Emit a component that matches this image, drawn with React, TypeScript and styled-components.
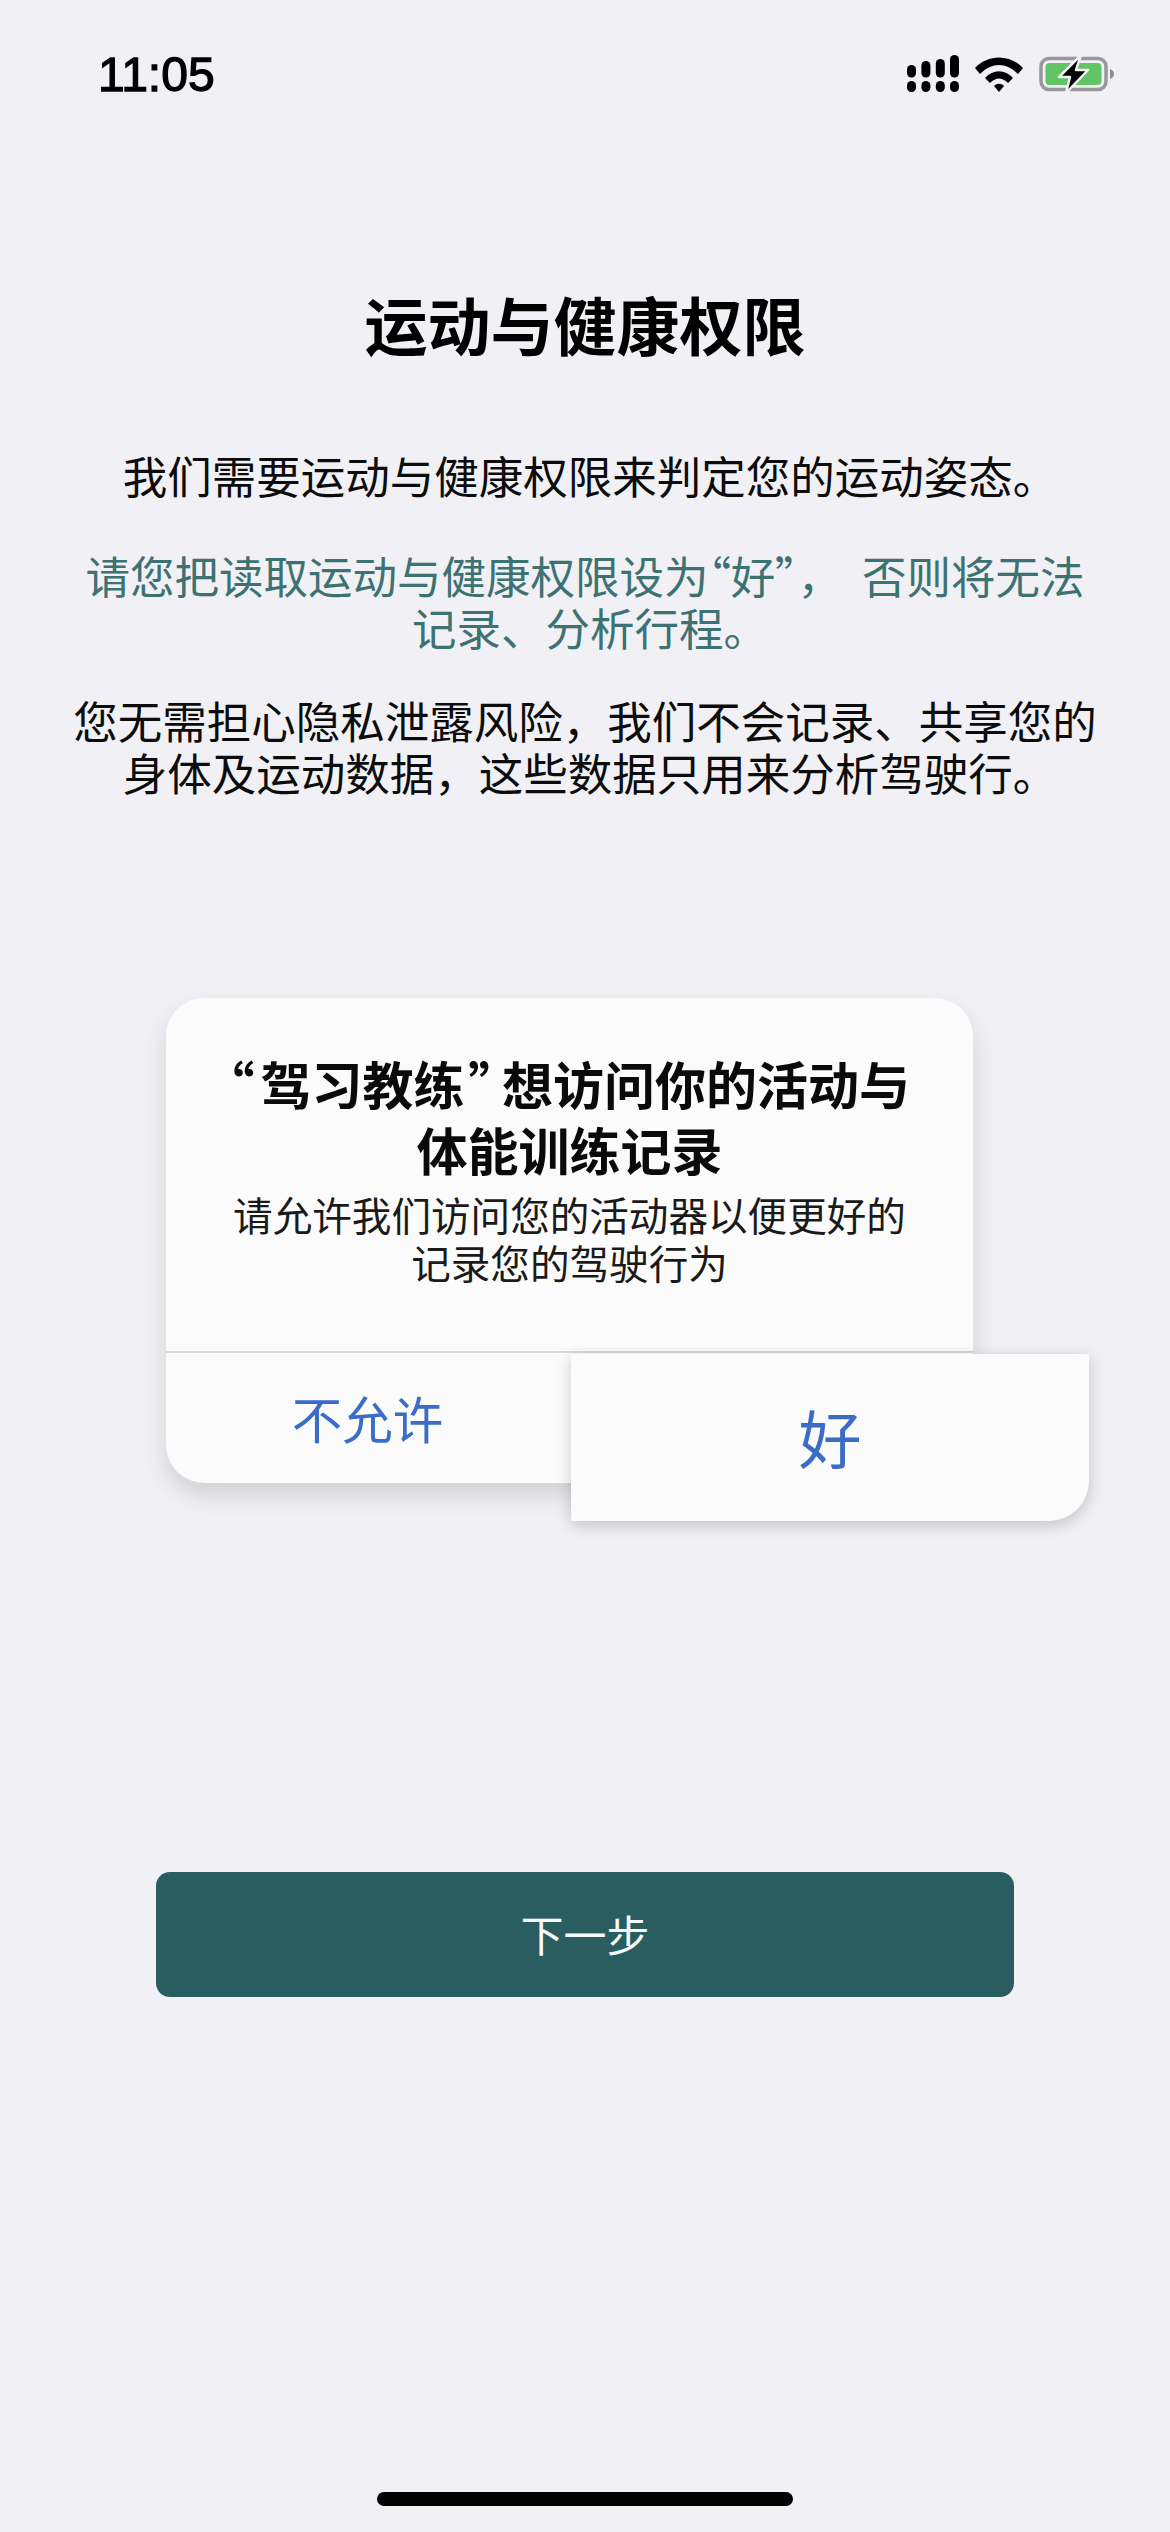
import React from "react";
import styled, { createGlobalStyle } from "styled-components";

const Global = createGlobalStyle`
  html, body { margin: 0; padding: 0; background: #f0f0f5; }
  * { box-sizing: border-box; }
`;

const cjk = `"Noto Sans CJK SC", "Noto Sans", sans-serif`;

const Page = styled.div`
  width: 1170px;
  height: 2532px;
  background: #f0f0f5;
  display: flex;
  flex-direction: column;
  align-items: center;
  font-family: ${cjk};
  overflow: hidden;
`;

const StatusBar = styled.div`
  width: 100%;
  height: 150px;
  flex: none;
  padding: 51px 55px 0 98px;
  display: flex;
  justify-content: space-between;
  align-items: flex-start;
`;

const Clock = styled.div`
  font-family: "Liberation Sans", Arial, sans-serif;
  font-size: 49px;
  line-height: 46px;
  font-weight: 400;
  color: #000;
  transform: scaleX(0.98);
  transform-origin: left center;
  -webkit-text-stroke: 1.3px #000;
`;

const StatusIcons = styled.div`
  display: flex;
  align-items: flex-start;
  gap: 15px;
  margin-top: 4px;
`;

const Title = styled.h1`
  margin: 138px 0 0;
  font-size: 63px;
  line-height: 70px;
  font-weight: 700;
  color: #000;
  text-align: center;
  white-space: nowrap;
`;

const Paragraph = styled.div<{ $accent?: boolean; $gap: number }>`
  margin: ${(p) => p.$gap}px 0 0;
  font-size: 44.5px;
  line-height: 52px;
  font-weight: 400;
  color: ${(p) => (p.$accent ? "#3d7272" : "#0c0c0c")};
  text-align: center;
  white-space: nowrap;
`;

/* A line that ends in a full stop sits a little right of true centre in the reference. */
const Line = styled.div<{ $offset?: number; $wordGap?: number }>`
  padding-left: ${(p) => p.$offset ?? 0}px;
  word-spacing: ${(p) => p.$wordGap ?? 0}px;
`;

const Quote = styled.span<{ $before?: number; $after?: number }>`
  font-feature-settings: "palt";
  margin-left: ${(p) => p.$before ?? 0}px;
  margin-right: ${(p) => p.$after ?? 0}px;
`;

const DialogArea = styled.div`
  position: relative;
  width: 807px;
  height: 485px;
  margin: 200px 31px 0 0;
  flex: none;
`;

const Dialog = styled.div`
  width: 100%;
  height: 100%;
  background: #fbfbfb;
  border-radius: 38px;
  box-shadow: 0 12px 24px rgba(0, 0, 0, 0.13);
  display: flex;
  flex-direction: column;
  overflow: hidden;
`;

const DialogBody = styled.div`
  height: 355px;
  flex: none;
  padding-top: 52px;
  text-align: center;
  border-bottom: 2px solid #d8d8d8;
`;

const DialogTitle = styled.div`
  font-size: 51px;
  line-height: 66px;
  font-weight: 700;
  color: #0a0a0a;
  white-space: nowrap;
`;

const DialogText = styled.div`
  font-size: 39.6px;
  line-height: 48px;
  margin-top: 8px;
  color: #1a1a1a;
  white-space: nowrap;
`;

const DenyButton = styled.div`
  width: 403px;
  flex: 1;
  display: flex;
  align-items: center;
  justify-content: center;
  font-size: 50.5px;
  color: #3a6cc8;
  padding-bottom: 2px;
`;

const AllowCard = styled.div`
  position: absolute;
  left: 405px;
  top: 356px;
  width: 518px;
  height: 167px;
  background: #fbfbfb;
  border-bottom-right-radius: 40px;
  box-shadow: 0 4px 16px rgba(0, 0, 0, 0.2);
  display: flex;
  align-items: center;
  justify-content: center;
  padding-bottom: 4px;
  font-size: 63px;
  color: #3a6cc8;
`;

const NextButton = styled.div`
  width: 858px;
  height: 125px;
  flex: none;
  margin-top: 389px;
  padding-bottom: 4px;
  background: #2a5d60;
  border-radius: 14px;
  display: flex;
  align-items: center;
  justify-content: center;
  font-size: 43px;
  color: #f6fafa;
`;

const HomeIndicator = styled.div`
  width: 416px;
  height: 14px;
  flex: none;
  margin-top: 495px;
  border-radius: 7px;
  background: #000;
`;

const SignalIcon = () => (
  <svg width="52" height="38" viewBox="0 0 52 38">
    <g fill="#000">
      <rect x="0" y="10" width="9" height="12.5" rx="4.5" />
      <rect x="14.4" y="6" width="9" height="16.5" rx="4.5" />
      <rect x="28.8" y="4" width="9" height="18.5" rx="4.5" />
      <rect x="43" y="0" width="9" height="22.5" rx="4.5" />
      <rect x="0" y="26" width="9" height="11" rx="4.5" />
      <rect x="14.4" y="26" width="9" height="11" rx="4.5" />
      <rect x="28.8" y="26" width="9" height="11" rx="4.5" />
      <rect x="43" y="26" width="9" height="11" rx="4.5" />
    </g>
  </svg>
);

const WifiIcon = () => (
  <svg width="50" height="38" viewBox="0 0 50 38">
    <path d="M1 13 C14 -1 36 -1 49 13 L44 19 C32 7 18 7 6 19 Z" fill="#000" />
    <path d="M11 23 C19 14 31 14 39 23 L34 28 C28 22 22 22 16 28 Z" fill="#000" />
    <path d="M20 31 C23 28 27 28 30 31 L25 37 Z" fill="#000" />
  </svg>
);

const BatteryIcon = () => (
  <svg width="76" height="38" viewBox="0 0 76 38">
    <rect x="2" y="3.5" width="65" height="31" rx="8" fill="none" stroke="#98989c" strokeWidth="3.5" />
    <rect x="6.5" y="8" width="56" height="22" rx="4" fill="#63c466" />
    <path d="M71 14 C74 15 75 17 75 19 C75 21 74 23 71 24 Z" fill="#8e8e92" />
    <path d="M42 0 L20 22 L31 22 L27 38 L49 15 L37 15 Z" fill="#000" stroke="#f0f0f5" strokeWidth="2.5" strokeLinejoin="round" />
  </svg>
);

export default function App() {
  return (
    <>
      <Global />
      <Page>
        <StatusBar>
          <Clock>11:05</Clock>
          <StatusIcons>
            <SignalIcon />
            <WifiIcon />
            <BatteryIcon />
          </StatusIcons>
        </StatusBar>
        <Title>运动与健康权限</Title>
        <Paragraph $gap={91}>
          <Line $offset={10}>我们需要运动与健康权限来判定您的运动姿态。</Line>
        </Paragraph>
        <Paragraph $accent $gap={48}>
          <Line $wordGap={10}>
            请您把读取运动与健康权限设为<Quote>“</Quote>好<Quote>”</Quote>， 否则将无法
          </Line>
          <Line $offset={10}>记录、分析行程。</Line>
        </Paragraph>
        <Paragraph $gap={41}>
          <Line>您无需担心隐私泄露风险，我们不会记录、共享您的</Line>
          <Line $offset={10}>身体及运动数据，这些数据只用来分析驾驶行。</Line>
        </Paragraph>
        <DialogArea>
          <Dialog>
            <DialogBody>
              <DialogTitle>
                <Quote $after={6}>“</Quote>驾习教练<Quote $before={4} $after={8}>”</Quote>想访问你的活动与
                <br />
                体能训练记录
              </DialogTitle>
              <DialogText>
                请允许我们访问您的活动器以便更好的
                <br />
                记录您的驾驶行为
              </DialogText>
            </DialogBody>
            <DenyButton>不允许</DenyButton>
          </Dialog>
          <AllowCard>好</AllowCard>
        </DialogArea>
        <NextButton>下一步</NextButton>
        <HomeIndicator />
      </Page>
    </>
  );
}
